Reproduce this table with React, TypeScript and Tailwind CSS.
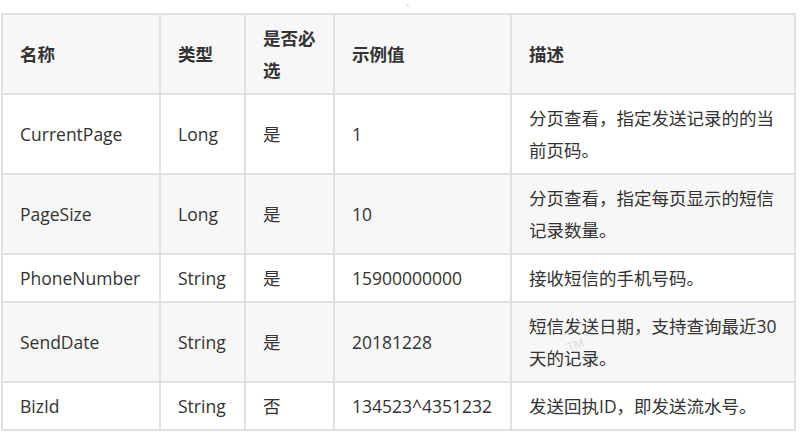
import React from "react";

type Row = { name: string; type: string; req: string; ex: string; desc: React.ReactNode; shade: boolean };

const rows: Row[] = [
  { name: "CurrentPage", type: "Long", req: "是", ex: "1", desc: <>分页查看，指定发送记录的的当<br />前页码。</>, shade: false },
  { name: "PageSize", type: "Long", req: "是", ex: "10", desc: <>分页查看，指定每页显示的短信<br />记录数量。</>, shade: true },
  { name: "PhoneNumber", type: "String", req: "是", ex: "15900000000", desc: <>接收短信的手机号码。</>, shade: false },
  {
    name: "SendDate",
    type: "String",
    req: "是",
    ex: "20181228",
    desc: (
      <span className="relative block">
        短信发送日期，支持查询最近30
        <br />
        天的记录。
        <span className="absolute left-[38px] top-[29px] text-[12px] leading-none text-[#dadada] -rotate-[20deg] font-['Open_Sans',sans-serif]">TM</span>
      </span>
    ),
    shade: true,
  },
  { name: "BizId", type: "String", req: "否", ex: "134523^4351232", desc: <>发送回执ID，即发送流水号。</>, shade: false },
];

const cell = "px-[17px] py-[7px] flex items-center";

export default function App() {
  return (
    <div className="relative w-[805px] h-[441px] bg-white text-[17.5px] leading-[32px] text-[#333] font-['Open_Sans','Noto_Sans_CJK_SC',sans-serif]">
      <div className="absolute left-[406px] top-[4px] w-[3px] h-[3px] rounded-full bg-[#e4e4e4]" />
      <div className="pt-[13px] pl-[1px]">
        <div className="w-[795px] bg-[#dfe2e5] p-[2px] grid grid-cols-[156px_83px_87px_175px_282px] gap-[2px]">
          <div className={`${cell} bg-[#f7f7f7] font-bold`}>名称</div>
          <div className={`${cell} bg-[#f7f7f7] font-bold`}>类型</div>
          <div className={`${cell} bg-[#f7f7f7] font-bold`}>是否必<br />选</div>
          <div className={`${cell} bg-[#f7f7f7] font-bold`}>示例值</div>
          <div className={`${cell} bg-[#f7f7f7] font-bold`}>描述</div>
          {rows.map((r) => {
            const bg = r.shade ? "bg-[#f7f7f7]" : "bg-white";
            return (
              <React.Fragment key={r.name}>
                <div className={`${cell} ${bg}`}>{r.name}</div>
                <div className={`${cell} ${bg}`}>{r.type}</div>
                <div className={`${cell} ${bg}`}>{r.req}</div>
                <div className={`${cell} ${bg}`}>{r.ex}</div>
                <div className={`${cell} ${bg}`}><div className="whitespace-nowrap">{r.desc}</div></div>
              </React.Fragment>
            );
          })}
        </div>
      </div>
    </div>
  );
}
